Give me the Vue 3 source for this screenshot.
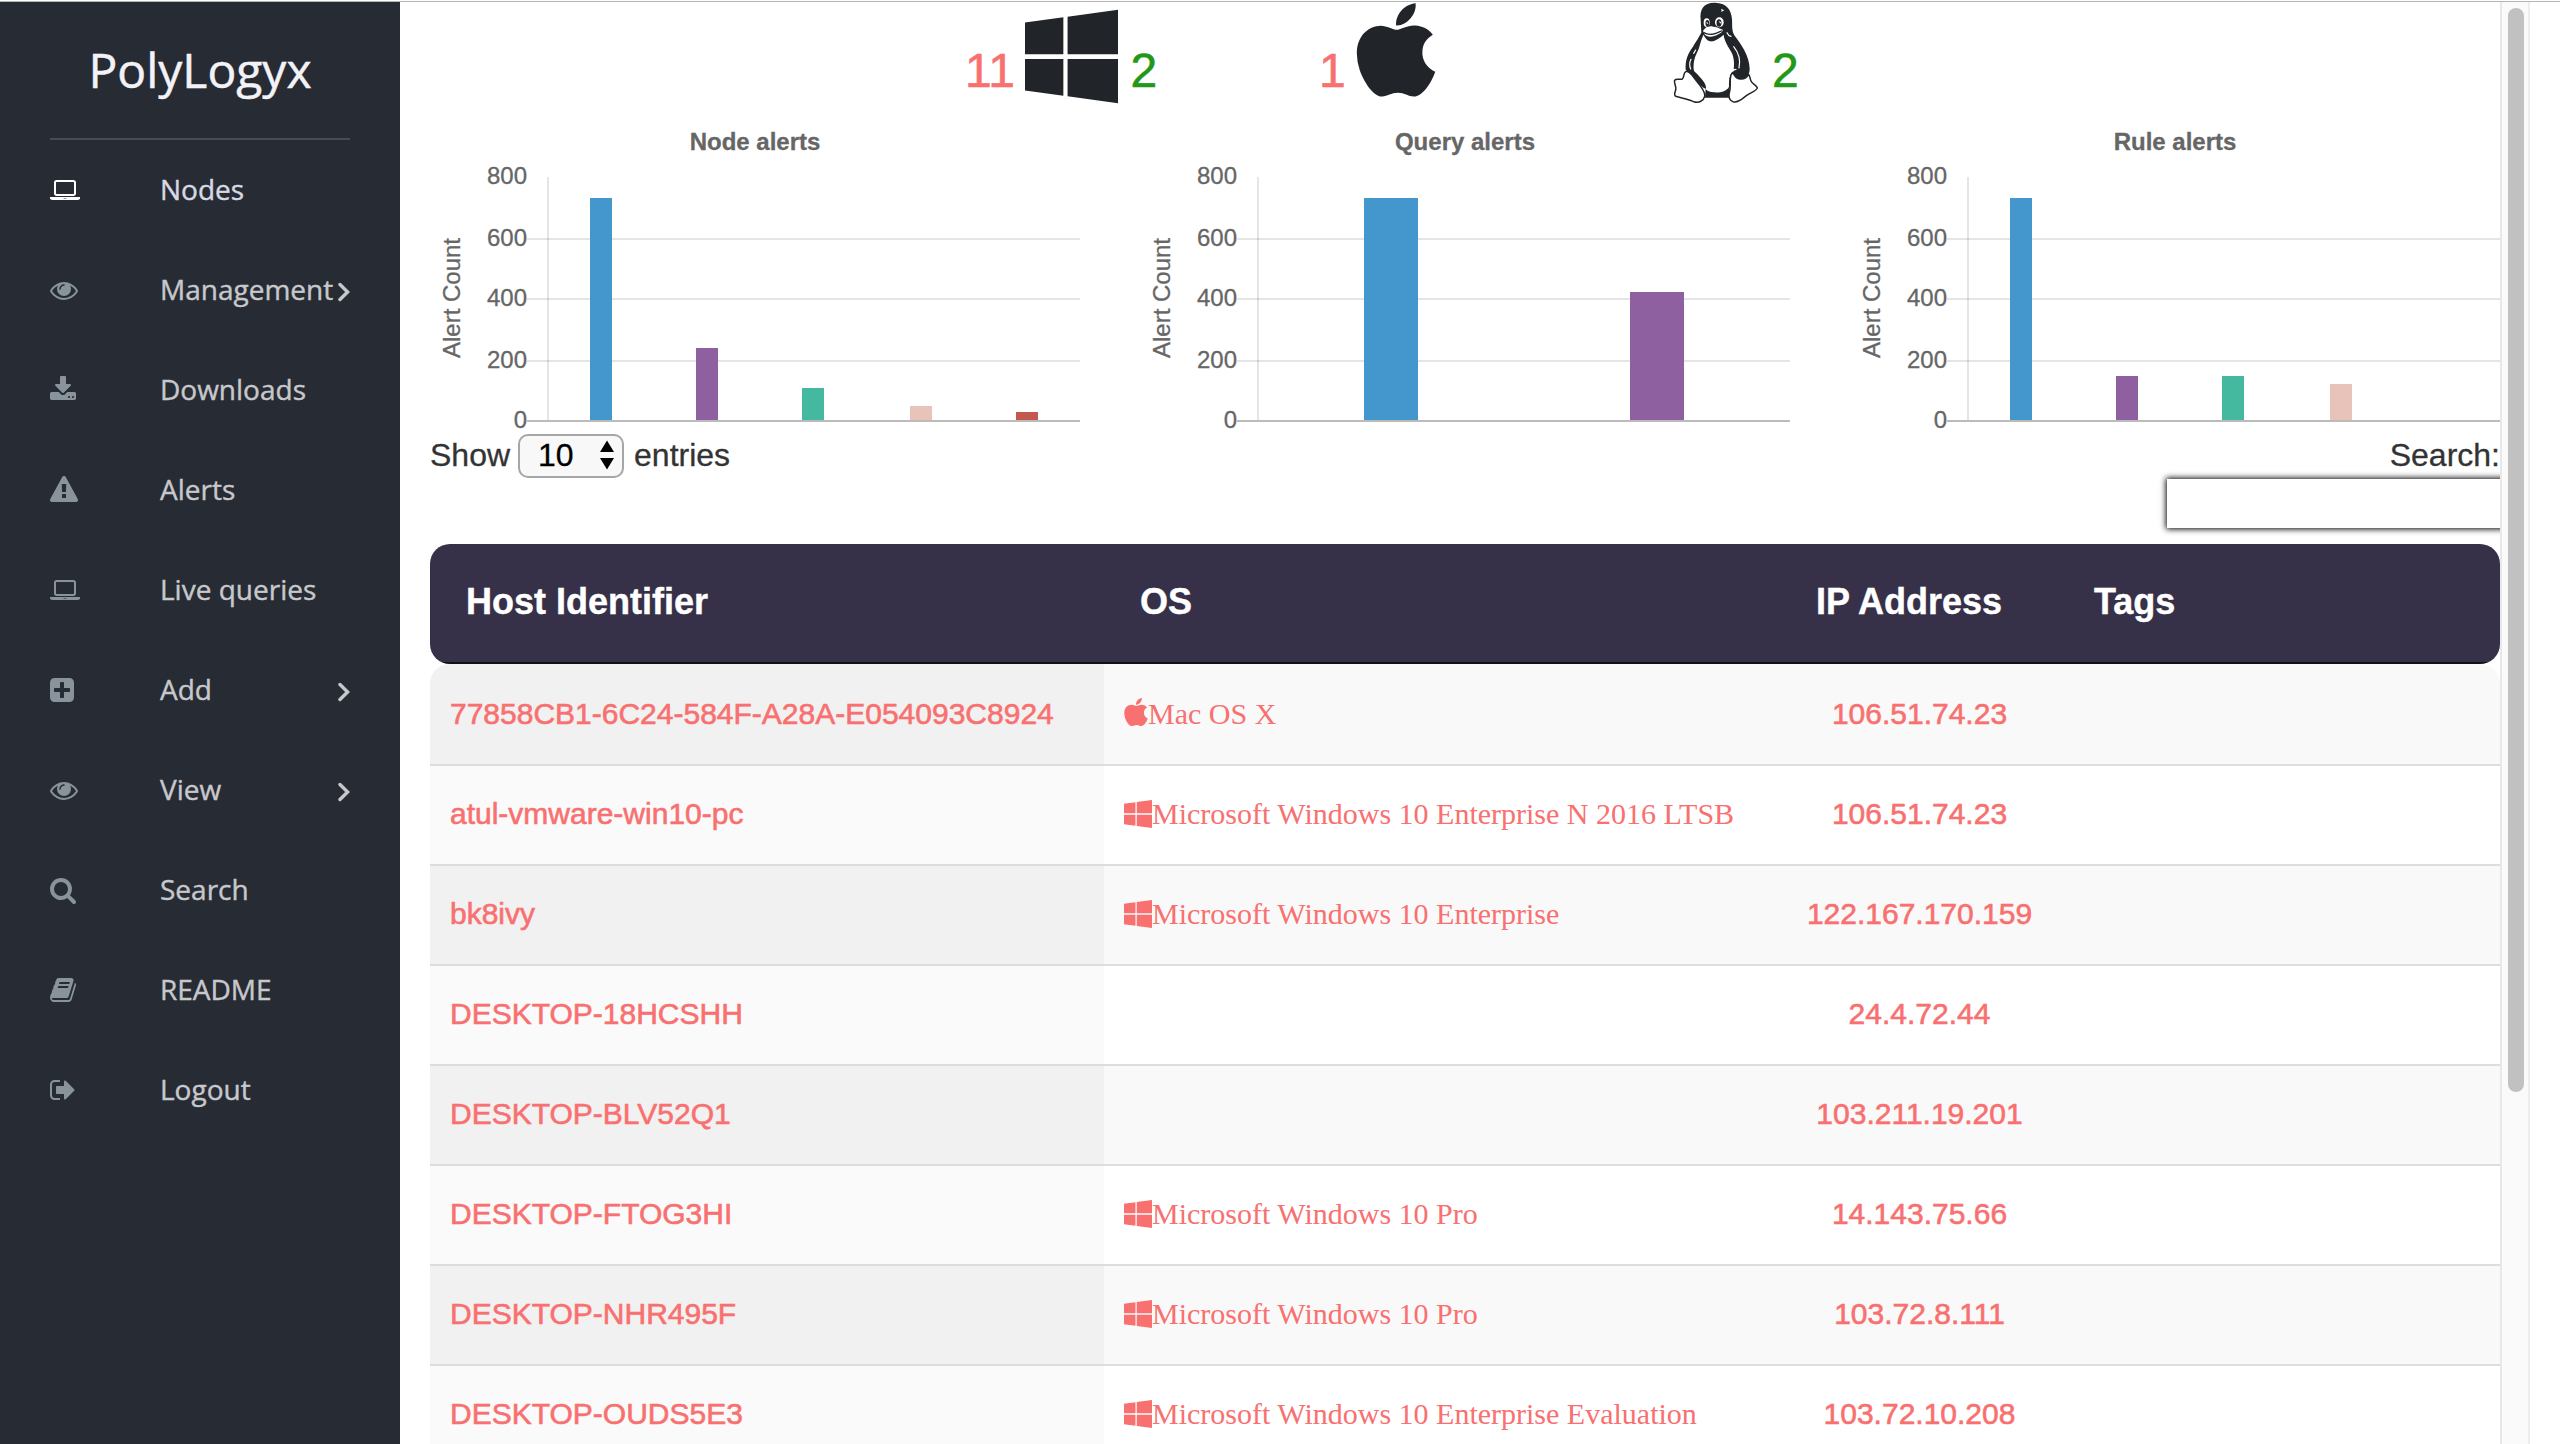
<script setup>
const icons = {
  laptop: { vb: '0 0 1920 1792', w: 30, d: 'M416 1280q-66 0-113-47t-47-113v-704q0-66 47-113t113-47h1088q66 0 113 47t47 113v704q0 66-47 113t-113 47h-1088zm-32-864v704q0 13 9.5 22.5t22.5 9.5h1088q13 0 22.5-9.5t9.5-22.5v-704q0-13-9.5-22.5t-22.5-9.5h-1088q-13 0-22.5 9.5t-9.5 22.5zm1376 928h160v96q0 40-47 68t-113 28h-1600q-66 0-113-28t-47-68v-96h1760zm-720 96q16 0 16-16t-16-16h-160q-16 0-16 16t16 16h160z' },
  eye: { vb: '0 0 1792 1792', w: 28, d: 'M1664 960q-152-236-381-353 61 104 61 225 0 185-131.5 316.5t-316.5 131.5-316.5-131.5-131.5-316.5q0-121 61-225-229 117-381 353 133 205 333.5 326.5t434.5 121.5 434.5-121.5 333.5-326.5zm-720-384q0-20-14-34t-34-14q-125 0-214.5 89.5t-89.5 214.5q0 20 14 34t34 14 34-14 14-34q0-86 61-147t147-61q20 0 34-14t14-34zm848 384q0 34-20 69-140 230-376.5 368.5t-499.5 138.5-499.5-139-376.5-368q-20-35-20-69t20-69q140-229 376.5-368t499.5-139 499.5 139 376.5 368q20 35 20 69z' },
  download: { vb: '64 0 1664 1792', w: 26, d: 'M1344 1344q0-26-19-45t-45-19-45 19-19 45 19 45 45 19 45-19 19-45zm256 0q0-26-19-45t-45-19-45 19-19 45 19 45 45 19 45-19 19-45zm128-224v320q0 40-28 68t-68 28h-1472q-40 0-68-28t-28-68v-320q0-40 28-68t68-28h465l135 136q58 56 136 56t136-56l136-136h464q40 0 68 28t28 68zm-325-569q17 41-14 70l-448 448q-18 19-45 19t-45-19l-448-448q-31-29-14-70 17-39 59-39h256v-448q0-26 19-45t45-19h256q26 0 45 19t19 45v448h256q42 0 59 39z' },
  warning: { vb: '0 0 1792 1792', w: 28, d: 'M1024 1375v-190q0-14-9.5-23.5t-22.5-9.5h-192q-13 0-22.5 9.5t-9.5 23.5v190q0 14 9.5 23.5t22.5 9.5h192q13 0 22.5-9.5t9.5-23.5zm-2-374l18-459q0-12-10-19-13-11-24-11h-220q-11 0-24 11-10 7-10 21l17 457q0 10 10 16.5t24 6.5h185q14 0 23.5-6.5t10.5-16.5zm-14-934l768 1408q35 63-2 126-17 29-46.5 46t-63.5 17h-1536q-34 0-63.5-17t-46.5-46q-37-63-2-126l768-1408q17-31 47-49t65-18 65 18 47 49z' },
  plus: { vb: '128 0 1536 1792', w: 24, d: 'M1408 960v-128q0-26-19-45t-45-19h-320v-320q0-26-19-45t-45-19h-128q-26 0-45 19t-19 45v320h-320q-26 0-45 19t-19 45v128q0 26 19 45t45 19h320v320q0 26 19 45t45 19h128q26 0 45-19t19-45v-320h320q26 0 45-19t19-45zm256-544v960q0 119-84.5 203.5t-203.5 84.5h-960q-119 0-203.5-84.5t-84.5-203.5v-960q0-119 84.5-203.5t203.5-84.5h960q119 0 203.5 84.5t84.5 203.5z' },
  search: { vb: '64 0 1664 1792', w: 26, d: 'M1216 832q0-185-131.5-316.5t-316.5-131.5-316.5 131.5-131.5 316.5 131.5 316.5 316.5 131.5 316.5-131.5 131.5-316.5zm512 832q0 52-38 90t-90 38q-54 0-90-38l-343-342q-179 124-399 124-143 0-273.5-55.5t-225-150-150-225-55.5-273.5 55.5-273.5 150-225 225-150 273.5-55.5 273.5 55.5 225 150 150 225 55.5 273.5q0 220-124 399l343 343q37 37 37 90z' },
  book: { vb: '64 0 1664 1792', w: 26, d: 'M1703 478q40 57 18 129l-275 906q-19 64-76.5 107.5t-122.5 43.5h-923q-77 0-148.5-53.5t-99.5-131.5q-24-67-2-127 0-4 3-27t4-37q1-8-3-21.5t-3-19.5q2-11 8-21t16.5-23.5 16.5-23.5q23-38 45-91.5t30-91.5q3-10 .5-30t-.5-28q3-11 17-28t17-23q21-36 42-92t25-90q1-9-2.5-32t.5-28q4-13 22-30.5t22-22.5q19-26 42.5-84.5t27.5-96.5q1-8-3-25.5t-2-26.5q2-8 9-18t18-23 17-21q8-12 16.5-30.5t15-35 16-36 19.5-32 26.5-23.5 36-11.5 47.5 5.5l-1 3q38-9 51-9h761q74 0 114 56t18 130l-274 906q-36 119-71.5 153.5t-128.5 34.5h-869q-27 0-38 15-11 16-1 43 24 70 144 70h923q29 0 56-15.5t35-41.5l300-987q7-22 5-57 38 15 59 43zm-1064 2q-4 13 2 22.5t20 9.5h608q13 0 25.5-9.5t16.5-22.5l21-64q4-13-2-22.5t-20-9.5h-608q-13 0-25.5 9.5t-16.5 22.5zm-83 256q-4 13 2 22.5t20 9.5h608q13 0 25.5-9.5t16.5-22.5l21-64q4-13-2-22.5t-20-9.5h-608q-13 0-25.5 9.5t-16.5 22.5z' },
  logout: { vb: '64 0 1600 1792', w: 25, d: 'M704 1440q0 4 1 20t.5 26.5-3 23.5-10 19.5-20.5 6.5h-320q-119 0-203.5-84.5t-84.5-203.5v-704q0-119 84.5-203.5t203.5-84.5h320q13 0 22.5 9.5t9.5 22.5q0 4 1 20t.5 26.5-3 23.5-10 19.5-20.5 6.5h-320q-66 0-113 47t-47 113v704q0 66 47 113t113 47h312l11.5 1 11.5 3 8 5.5 7 9 2 13.5zm928-544q0 26-19 45l-544 544q-19 19-45 19t-45-19-19-45v-288h-448q-26 0-45-19t-19-45v-384q0-26 19-45t45-19h448v-288q0-26 19-45t45-19 45 19l544 544q19 19 19 45z' },
}
const winPath = 'M0 93.7l183.6-25.3v177.4H0V93.7zm0 324.6l183.6 25.3V268.4H0v149.9zm203.8 28L448 480V268.4H203.8v177.9zm0-380.6v180.1H448V32L203.8 65.7z'
const applePath = 'M318.7 268.7c-.2-36.7 16.4-64.4 50-84.8-18.8-26.9-47.2-41.7-84.7-44.6-35.5-2.8-74.3 20.7-88.5 20.7-15 0-49.4-19.7-76.4-19.7C63.3 141.2 4 184.8 4 273.5q0 39.3 14.4 81.2c12.8 36.7 59 126.7 107.2 125.2 25.2-.6 43-17.9 75.8-17.9 31.8 0 48.3 17.9 76.4 17.9 48.6-.7 90.4-82.5 102.6-119.3-65.2-30.7-61.7-90-61.7-91.9zm-56.6-164.2c27.3-32.4 24.8-61.9 24-72.5-24.1 1.4-52 16.4-67.9 34.9-17.5 19.8-27.8 44.3-25.6 71.9 26.1 2 49.9-11.4 69.5-34.3z'

const menu = [
  { label: 'Nodes', icon: 'laptop', active: true },
  { label: 'Management', icon: 'eye', sub: true },
  { label: 'Downloads', icon: 'download' },
  { label: 'Alerts', icon: 'warning' },
  { label: 'Live queries', icon: 'laptop' },
  { label: 'Add', icon: 'plus', sub: true },
  { label: 'View', icon: 'eye', sub: true },
  { label: 'Search', icon: 'search' },
  { label: 'README', icon: 'book' },
  { label: 'Logout', icon: 'logout' },
]

const blue = '#4397cd', purple = '#8f609f', green = '#45b9a0', pink = '#e8c3b9', red = '#c45850'
// bar: [x, top, width, colour]
const charts = [
  { title: 'Node alerts', bars: [[160, 88, 22, blue], [266, 238, 22, purple], [372, 278, 22, green], [480, 296, 22, pink], [586, 302, 22, red]], end: 650 },
  { title: 'Query alerts', bars: [[224, 88, 54, blue], [490, 182, 54, purple]], end: 650 },
  { title: 'Rule alerts', bars: [[160, 88, 22, blue], [266, 266, 22, purple], [372, 266, 22, green], [480, 274, 22, pink]], end: 710 },
]
const ticks = [
  { v: 800, text: 74 },
  { v: 600, text: 136, y: 128 },
  { v: 400, text: 196, y: 188 },
  { v: 200, text: 258, y: 250 },
  { v: 0, text: 318 },
]

const rows = [
  { host: '77858CB1-6C24-584F-A28A-E054093C8924', os: 'Mac OS X', kind: 'apple', ip: '106.51.74.23' },
  { host: 'atul-vmware-win10-pc', os: 'Microsoft Windows 10 Enterprise N 2016 LTSB', kind: 'win', ip: '106.51.74.23' },
  { host: 'bk8ivy', os: 'Microsoft Windows 10 Enterprise', kind: 'win', ip: '122.167.170.159' },
  { host: 'DESKTOP-18HCSHH', os: '', ip: '24.4.72.44' },
  { host: 'DESKTOP-BLV52Q1', os: '', ip: '103.211.19.201' },
  { host: 'DESKTOP-FTOG3HI', os: 'Microsoft Windows 10 Pro', kind: 'win', ip: '14.143.75.66' },
  { host: 'DESKTOP-NHR495F', os: 'Microsoft Windows 10 Pro', kind: 'win', ip: '103.72.8.111' },
  { host: 'DESKTOP-OUDS5E3', os: 'Microsoft Windows 10 Enterprise Evaluation', kind: 'win', ip: '103.72.10.208' },
]
</script>

<template>
  <div class="page">
    <div class="topline"></div>
    <div class="body">
      <aside class="sidebar">
        <h1 class="brand">PolyLogyx</h1>
        <nav class="menu">
          <a v-for="m in menu" :key="m.label" class="item" :class="{ active: m.active }">
            <span class="slot">
              <svg :width="icons[m.icon].w" height="28" :viewBox="icons[m.icon].vb"><path :d="icons[m.icon].d" fill="currentColor" /></svg>
            </span>
            <span class="label">{{ m.label }}</span>
            <svg v-if="m.sub" class="chev" width="12" height="20" viewBox="0 0 12 20"><path d="M2 2.5 L9.6 10 L2 17.5" fill="none" stroke="currentColor" stroke-width="3.4" stroke-linecap="round" stroke-linejoin="miter" /></svg>
          </a>
        </nav>
      </aside>

      <main class="main">
        <section class="counts">
          <div class="os">
            <span class="num off">11</span>
            <svg class="logo" width="93.6" height="107" viewBox="0 0 448 512"><path :d="winPath" fill="#212529" /></svg>
            <span class="num on">2</span>
          </div>
          <div class="os">
            <span class="num off">1</span>
            <svg class="logo apple" width="80" height="107" viewBox="0 32 384 512"><path :d="applePath" fill="#212529" /></svg>
          </div>
          <div class="os">
            <svg class="tux" width="86" height="101" viewBox="38 4 258 303">
              <g fill="#212529">
                <path d="M121 58 C117 24 132 5 164 6 C198 7 213 26 215 56 C216 78 214 90 222 104 C240 128 268 165 268 205 C268 226 254 236 238 236 L208 262 C206 280 206 284 206 291 L134 291 L136 264 L76 208 C74 176 84 156 98 138 C106 124 112 116 123 96 Z" />
              </g>
              <path fill="#fff" d="M130 102 C134 112 142 122 152 122 C164 122 176 114 190 102 C192 122 204 138 214 156 C222 172 222 192 220 208 C206 220 206 244 206 258 C200 272 178 277 160 275 C150 274 142 272 136 266 C142 250 118 228 104 214 C98 208 100 196 100 190 C102 168 110 158 116 142 C120 130 122 118 128 106 Z" />
              <path fill="#212529" d="M134 100 C140 110 144 118 152 122 C164 120 176 108 188 100 L190 92 L134 92 Z" />
              <path fill="#fff" d="M128 90 C134 82 142 74 154 75 C166 78 182 84 188 88 C188 94 174 102 162 106 C148 110 138 108 132 100 Z" />
              <path fill="none" stroke="#212529" stroke-width="4" d="M129 95 C140 102 150 102 160 100 C172 97 180 92 186 90" />
              <ellipse cx="139" cy="66" rx="9" ry="13" fill="#fff" />
              <ellipse cx="177" cy="65" rx="13" ry="15" fill="#fff" />
              <ellipse cx="141" cy="68" rx="5.5" ry="10" fill="#212529" />
              <ellipse cx="176" cy="67" rx="7.5" ry="11" fill="#212529" />
              <path fill="#fff" d="M139 63l4 4-1 4-3-3zM177 60l5 5-1 4-4-4zM182 24 l10 5 -10 5 2-5z" />
              <path fill="#212529" d="M138 78 C146 70 158 72 166 80 L154 77 Z" />
              <path fill="none" stroke="#fff" stroke-width="3.5" stroke-linecap="round" d="M92 176 C86 188 88 198 91 205 M106 148 L100 158 M200 96 C203 103 207 106 212 107 M220 138 C238 160 240 184 236 202 M227 206 C222 206 218 208 217 212" />
              <path fill="#fff" stroke="#212529" stroke-width="4.5" stroke-linejoin="round" d="M76 213 C68 218 72 232 66 235 C58 238 46 233 43 239 C40 247 49 258 46 268 C43 279 40 284 46 287 C62 291 84 297 100 303 C116 308 130 300 133 287 C136 272 120 254 108 240 C98 228 88 208 76 213 Z" />
              <path fill="#212529" d="M80 212 C94 214 106 224 118 234 C132 244 136 256 136 264 C124 260 118 250 108 240 C98 228 92 218 80 212 Z" />
              <path fill="#fff" stroke="#212529" stroke-width="4.5" stroke-linejoin="round" d="M212 223 C207 236 212 256 208 272 C204 286 206 298 218 303 C234 308 246 294 258 285 C270 276 290 270 291 262 C288 253 276 250 272 241 C268 232 270 226 264 221 C260 232 250 236 238 235 C226 234 224 226 220 220 C216 217 214 219 212 223 Z" />
            </svg>
            <span class="num on">2</span>
          </div>
        </section>

        <section class="charts">
          <svg v-for="c in charts" :key="c.title" class="chart" width="710" height="322" viewBox="0 0 710 322">
            <text x="325" y="40" text-anchor="middle" class="ctitle">{{ c.title }}</text>
            <text transform="translate(29.5 188) rotate(-90)" text-anchor="middle" class="tick">Alert Count</text>
            <template v-for="t in ticks" :key="t.v">
              <text x="97" :y="t.text" text-anchor="end" class="tick">{{ t.v }}</text>
              <rect v-if="t.y" x="97" :y="t.y" :width="c.end - 97" height="2" fill="rgba(0,0,0,.1)" />
            </template>
            <rect x="117" y="67" width="2" height="243" fill="rgba(0,0,0,.1)" />
            <rect x="97" y="310" :width="c.end - 97" height="2" fill="#bbb" />
            <rect v-for="b in c.bars" :key="b[0]" :x="b[0]" :y="b[1]" :width="b[2]" :height="310 - b[1]" :fill="b[3]" />
          </svg>
        </section>

        <section class="controls">
          <div class="show">
            <span>Show</span>
            <div class="select">
              <span>10</span>
              <svg width="14" height="30" viewBox="0 0 14 30"><path d="M7 0.5L14 12H0zM7 29.5L0 18h14z" fill="#000" /></svg>
            </div>
            <span>entries</span>
          </div>
          <div class="find">
            <span class="flabel">Search:</span>
            <div class="field"></div>
          </div>
        </section>

        <section class="table">
          <div class="thead">
            <div class="th c1">Host Identifier</div>
            <div class="th c2">OS</div>
            <div class="th c3">IP Address</div>
            <div class="th c4">Tags</div>
          </div>
          <div v-for="r in rows" :key="r.host" class="tr">
            <div class="td host">{{ r.host }}</div>
            <div class="td osname">
              <svg v-if="r.kind === 'apple'" width="24" height="32" viewBox="0 32 384 512"><path :d="applePath" fill="currentColor" /></svg>
              <svg v-if="r.kind === 'win'" width="28" height="32" viewBox="0 0 448 512"><path :d="winPath" fill="currentColor" /></svg>
              <span>{{ r.os }}</span>
            </div>
            <div class="td ip">{{ r.ip }}</div>
            <div class="td tags"></div>
          </div>
        </section>
      </main>

      <div class="scroll"><div class="thumb"></div></div>
    </div>
  </div>
</template>

<style>
body { margin: 0; background: #fff; overflow: hidden; }
</style>

<style scoped>
.page { width: 2560px; height: 1444px; overflow: hidden; display: flex; flex-direction: column; background: #fff; font-family: "Liberation Sans", Arial, sans-serif; }
.page * { box-sizing: border-box; }
svg { display: block; flex: none; }
.topline { height: 2px; flex: none; border-bottom: 1px solid #b4b4b4; }
.body { height: 1442px; display: flex; }
.sidebar { width: 400px; flex: none; background: #272b33; padding: 0 50px; font-family: "Open Sans", sans-serif; }
.brand { margin: 0; height: 138px; border-bottom: 2px solid #4b4b4d; font-weight: 400; font-size: 48px; line-height: 136px; text-align: center; color: #f2f2f7; -webkit-text-stroke: .5px #f2f2f7; }
.item { display: flex; align-items: center; height: 100px; color: #c7c8cc; font-size: 28px; line-height: 28px; }
.slot { width: 110px; flex: none; color: #88939b; }
.active { color: #d7d9e3; }
.active .slot { color: #fff; }
.label { flex: 1; min-width: 0; padding-bottom: 2px; -webkit-text-stroke: .4px currentColor; }
.chev { margin-top: 3px; }
.main { width: 2100px; flex: none; padding-left: 30px; overflow: hidden; display: flex; flex-direction: column; }
.counts { display: flex; height: 108px; flex: none; padding-left: 535px; }
.os { width: 354px; flex: none; display: flex; }
.num { font-size: 48px; line-height: 48px; margin-top: 45px; -webkit-text-stroke: .6px currentColor; }
.off { color: #f87070; }
.on { color: #239818; }
.logo { margin: 1px 12px 0 10px; }
.apple { margin: 1px 0 0 10px; }
.tux { margin-right: 13px; }
.charts { display: flex; height: 322px; flex: none; }
.chart { flex: none; }
.tick { font-size: 24px; fill: #666; stroke: #666; stroke-width: .3px; }
.ctitle { font-size: 24px; font-weight: 700; fill: #666; stroke: #666; stroke-width: .3px; }
.controls { height: 112px; flex: none; display: flex; justify-content: space-between; font-size: 32px; line-height: 42px; color: #333; padding-top: 2px; -webkit-text-stroke: .3px currentColor; }
.show { display: flex; gap: 9px; height: 44px; }
.select { width: 106px; height: 44px; margin-left: -1px; margin-right: 1px; border: 2px solid #a6a6a6; border-radius: 10px; background: #f8f8f8; display: flex; align-items: center; justify-content: space-between; padding: 0 8px 2px 18px; color: #000; line-height: 40px; }
.find { width: 333px; display: flex; flex-direction: column; }
.flabel { text-align: right; }
.field { margin-top: 3px; height: 49px; width: 400px; background: #fff; box-shadow: 0 0 6px 1px #000; }
.table { width: 2070px; flex: none; }
.thead { display: flex; align-items: center; height: 120px; background: linear-gradient(#363148 118px, #111 118px); border-radius: 20px; font-size: 36px; font-weight: 700; color: #fff; padding-bottom: 5px; -webkit-text-stroke: .4px #fff; }
.th { flex: none; }
.c1 { width: 710px; padding-left: 36px; }
.c2 { width: 676px; }
.c3 { width: 278px; }
.tr { display: flex; height: 100px; border-top: 2px solid #ddd; color: #f87070; font-size: 30px; line-height: 34px; }
.td { display: flex; align-items: center; padding-bottom: 3px; flex: none; }
.thead + .tr { border-top: 0; border-radius: 20px 20px 0 0; overflow: hidden; }
.thead + .tr .td { padding-bottom: 1px; }
.tr:nth-child(even) { background: #f9f9f9; }
.tr:nth-child(odd) .host { background: #fafafa; }
.tr:nth-child(even) .host { background: #f1f1f1; }
.host { width: 674px; padding-left: 20px; }
.osname { width: 675px; padding-left: 20px; font-family: "Liberation Serif", "Times New Roman", serif; }
.host, .ip { -webkit-text-stroke: .6px #f87070; }
.ip { width: 281px; justify-content: center; }
.tags { flex: 1; }
.scroll { width: 30px; flex: none; background: #fafafa; border-left: 2px solid #e8e8e8; border-right: 2px solid #ededed; padding: 6px 4px 0 6px; }
.thumb { width: 16px; height: 1084px; border-radius: 8px; background: #c1c1c1; }
</style>
